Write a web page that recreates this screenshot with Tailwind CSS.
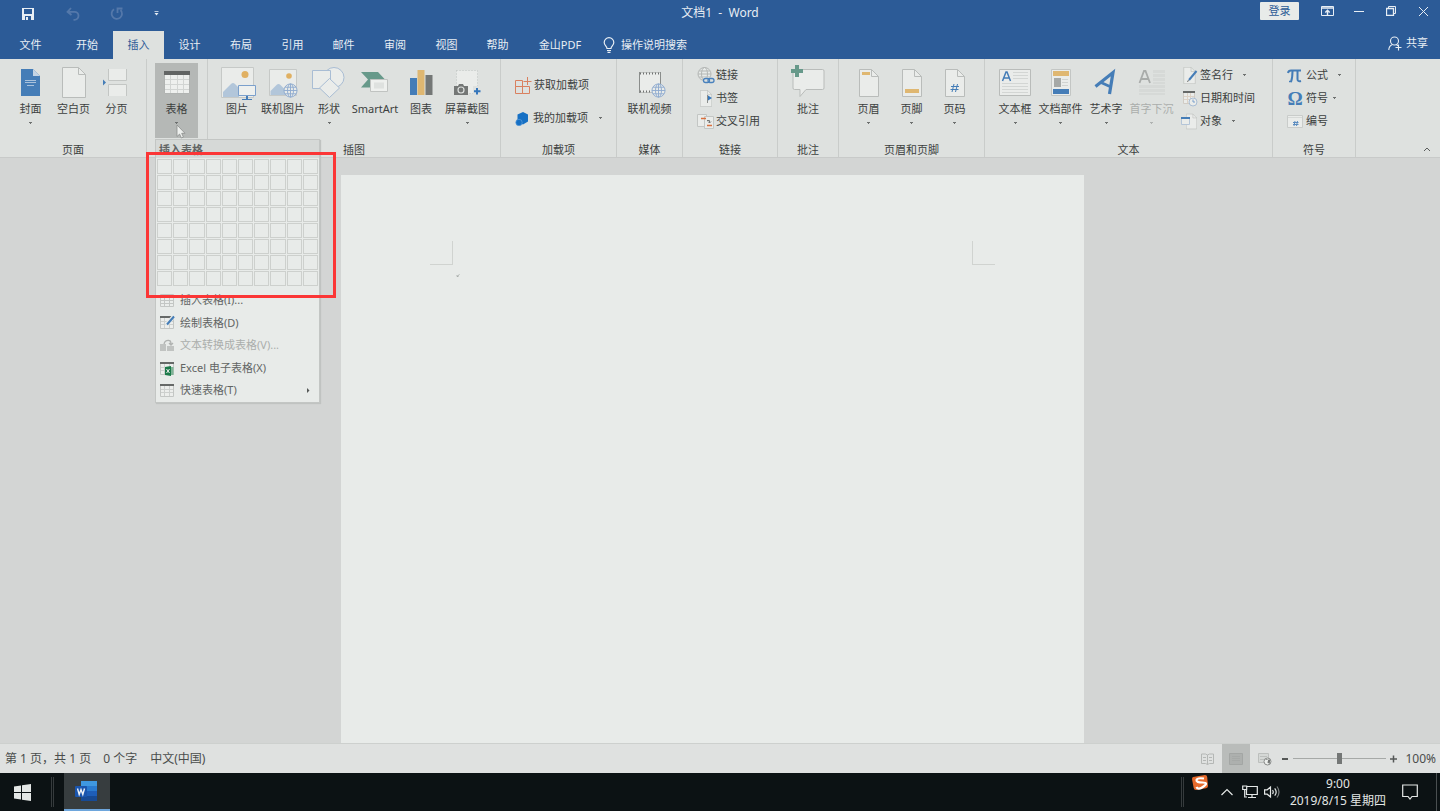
<!DOCTYPE html>
<html lang="zh-CN">
<head>
<meta charset="utf-8">
<title>文档1 - Word</title>
<script src="https://cdn.jsdelivr.net/npm/@tailwindcss/browser@4"></script>
</head>
<body class="flex h-screen flex-col overflow-hidden bg-[#d3d5d4] font-['Noto_Sans','Noto_Sans_CJK_SC',sans-serif] text-[11px] text-[#3c3f3e]">

<!-- shared symbols -->
<svg class="hidden">
  <symbol id="globe" viewBox="0 0 16 16"><g fill="#e8ebe9" stroke="#8fabcf" stroke-width="1"><circle cx="8" cy="8" r="7"/><ellipse cx="8" cy="8" rx="3.2" ry="7"/><path d="M1 8h14M2.2 4.5h11.6M2.2 11.5h11.6M8 1v14" fill="none"/></g></symbol>
  <symbol id="caret" viewBox="0 0 5 3"><path d="M1 0h3v1H3v1H2V1H1z" fill="#6e7170"/></symbol>
  <symbol id="page" viewBox="0 0 20 28"><path d="M.5.5h12l7 7v20H.5z" fill="#eaecea" stroke="#b9bcba"/><path d="M12.500.5v7h7" fill="none" stroke="#b9bcba"/></symbol>
  <symbol id="tbl" viewBox="0 0 14 13"><path d="M.5.5h13v12H.5z" fill="#eceeec" stroke="#c3c6c4"/><path d="M0 0h14v2H0z" fill="#666968"/><path d="M1 5.500h12M1 8.500h12M4.500 2v10M9.500 2v10" stroke="#cdd0ce"/></symbol>
</svg>

<!-- title bar -->
<header class="relative flex h-[31px] shrink-0 items-center justify-between bg-[#2c5b97] text-[#e8eef4]">
  <div class="flex items-center pb-[4px] pl-[21px]">
    <button aria-label="保存" class="mr-[31px]"><svg width="14" height="14" viewBox="0 0 14 14"><path d="M1 1h12v12H1z" fill="#e8eef4"/><path d="M3 2h8v5H3zM4 9h6v4H4z" fill="#2c5b97"/><path d="M5 10h2v3H5z" fill="#e8eef4"/></svg></button>
    <button aria-label="撤消" class="mr-[30px]"><svg width="14" height="14" viewBox="0 0 14 14" fill="none" stroke="#5478aa" stroke-width="1.800"><path d="M5 1L1.500 4.800 5.500 8M2 4.800h6.500a4 4 0 0 1 0 8H7.500"/></svg></button>
    <button aria-label="重复" class="mr-[30px]"><svg width="14" height="14" viewBox="0 0 14 14" fill="none" stroke="#5478aa" stroke-width="1.800"><path d="M4 2.300A5.200 5.200 0 1 0 10.500 3M7.500 6V1.500H12.500"/></svg></button>
    <button aria-label="自定义快速访问工具栏"><svg width="5" height="5" viewBox="0 0 5 5"><path d="M.5.5h4" stroke="#b9c9de"/><path d="M.5 2h4L2.500 4.500z" fill="#e8eef4"/></svg></button>
  </div>
  <h1 class="absolute inset-x-0 top-[3px] text-center text-[12px] leading-5 whitespace-pre">文档1  -  Word</h1>
  <div class="relative flex h-[22px] items-center self-start pr-[11px]">
    <button class="mr-[22px] h-[18px] w-[39px] rounded-[1px] bg-[#e8ebe9] leading-[18px] text-[#2c5b97]">登录</button>
    <button aria-label="功能区显示选项" class="mr-[20px]"><svg width="13" height="11" viewBox="0 0 13 11" fill="none" stroke="#e8eef4"><path d="M.5.5h12v9H.5z"/><path d="M1 2h11" stroke-width="1.500"/><path d="M6.500 9V4.500M4.300 6.500L6.500 4.300l2.200 2.200" stroke-width="1.400"/></svg></button>
    <button aria-label="最小化" class="mr-[22px]"><svg width="10" height="10" viewBox="0 0 10 10"><path d="M0 5.500h10" stroke="#e8eef4"/></svg></button>
    <button aria-label="还原" class="mr-[22px]"><svg width="10" height="10" viewBox="0 0 10 10" fill="none" stroke="#e8eef4"><path d="M.5 2.500h7v7h-7z" stroke-width="1.300"/><path d="M2.500 2V.5h7v7H8"/></svg></button>
    <button aria-label="关闭"><svg width="11" height="11" viewBox="0 0 11 11" stroke="#e8eef4"><path d="M1 1l9 9M10 1l-9 9"/></svg></button>
  </div>
</header>

<!-- tabs -->
<nav class="flex h-[28px] shrink-0 items-stretch bg-[#2c5b97] text-[#e8eef4]">
  <button class="w-[61px]">文件</button>
  <button class="w-[52px]">开始</button>
  <button class="w-[51px] bg-[#dee1df] text-[#2c5b97]">插入</button>
  <button class="w-[51px]">设计</button>
  <button class="w-[52px]">布局</button>
  <button class="w-[51px]">引用</button>
  <button class="w-[51px]">邮件</button>
  <button class="w-[52px]">审阅</button>
  <button class="w-[51px]">视图</button>
  <button class="w-[51px]">帮助</button>
  <button class="w-[74px]">金山PDF</button>
  <button class="flex items-center gap-[6px] pl-[6px]"><svg width="12" height="16" viewBox="0 0 12 16" fill="none" stroke="#e8eef4" stroke-width="1.200"><path d="M4 11.500C4 9 1.200 8.500 1.200 5.500a4.800 4.800 0 0 1 9.600 0C10.800 8.500 8 9 8 11.500z"/><path d="M4 13.500h4M4.500 15.300h3"/></svg>操作说明搜索</button>
  <button class="ml-auto flex items-center gap-[4px] pr-[12px] pb-[3px]"><svg width="14" height="15" viewBox="0 0 14 15" fill="none" stroke="#e8eef4" stroke-width="1.100"><circle cx="6.500" cy="5" r="4"/><path d="M.8 14c0-3 1.500-4.500 3.200-5.300M8.500 8.800l1.500 1M10.500 8.500v6M7.500 11.500h6"/></svg>共享</button>
</nav>

<!-- ribbon -->
<div class="relative z-10 flex h-[99px] shrink-0 border-b border-[#c8cac9] bg-[#dee1df]">
  <section class="flex w-[147px] flex-col justify-between border-r border-[#c9ccca] pt-[4px]">
    <div class="flex pl-[9px]">
      <button class="flex h-[75px] w-[43px] flex-col items-center pt-[2px]"><svg class="overflow-visible shrink-0" width="40" height="34"><path d="M10 4h12l7 7v20H10z" fill="#457db7"/><path d="M22 4v7h7z" fill="#c4d4e4"/><path d="M14 15.500h11M14 17.500h11M16 20.500h7" stroke="#a9c2dc"/></svg><span class="leading-5">封面</span><svg class="mt-[3px]" width="5" height="3"><use href="#caret"/></svg></button>
      <button class="flex h-[75px] w-[43px] flex-col items-center pt-[2px]"><svg class="shrink-0" width="40" height="34"><path d="M8.500 2.500h16l7 7v23h-23z" fill="#eaecea" stroke="#b9bcba"/><path d="M24.500 2.500v7h7" fill="none" stroke="#b9bcba"/></svg><span class="leading-5">空白页</span></button>
      <button class="flex h-[75px] w-[43px] flex-col items-center pt-[2px]"><svg class="shrink-0" width="40" height="34"><path d="M11 4h19v11.500H11zM11 19.500h19V31H11z" fill="#eaecea"/><path d="M11.500 4v11.500h18V4M11.500 31V19.500h18V31" fill="none" stroke="#c3c6c4"/><path d="M6 14.500l3 3L6 20.500z" fill="#457db7"/></svg><span class="leading-5">分页</span></button>
    </div>
    <h2 class="text-center leading-[14px]">页面</h2>
  </section>

  <section class="w-[61px] border-r border-[#c9ccca] pt-[4px] pl-[8px]">
    <button aria-expanded="true" class="flex h-[75px] w-[43px] flex-col items-center bg-[#b5b8b6] pt-[2px]"><svg class="shrink-0" width="40" height="34"><path d="M7.500 6.500h25v22h-25z" fill="#eef0ee" stroke="#b0b3b1"/><path d="M7 6h26v4H7z" fill="#626564"/><path d="M8 14.500h24M8 19.500h24M8 24.500h24M13.500 10v18M20.500 10v18M26.500 10v18" stroke="#d2d5d3"/></svg><span class="leading-5">表格</span><svg class="mt-[3px]" width="5" height="3"><use href="#caret"/></svg></button>
  </section>

  <section class="flex w-[293px] flex-col justify-between border-r border-[#c9ccca] pt-[4px]">
    <div class="flex pl-[6px]">
      <button class="flex h-[75px] w-[46px] flex-col items-center pt-[2px]"><svg class="overflow-visible shrink-0" width="40" height="34"><path d="M4.500 2.500h32v30h-32z" fill="#eaecea" stroke="#c6c9c7"/><circle cx="28" cy="9.500" r="3.500" fill="#e0b062"/><path d="M6 32V27l8-8q2-2 4 0l4 4v9z" fill="#b2c6da"/><path d="M21.500 20.500h17v10h-17z" fill="#eef0ee" stroke="#7ba0cc"/><path d="M30 31v3" stroke="#457db7" stroke-width="2"/><path d="M25 34.500h10" stroke="#457db7"/></svg><span class="leading-5">图片</span></button>
      <button class="flex h-[75px] w-[46px] flex-col items-center pt-[2px]"><svg class="overflow-visible shrink-0" width="40" height="34"><path d="M6.500 4.500h27v26h-27z" fill="#eaecea" stroke="#c6c9c7"/><circle cx="26" cy="11" r="2.800" fill="#e0b062"/><path d="M7.500 30v-4l6-6q2-2 4 0l5 5v5z" fill="#b2c6da"/><use href="#globe" x="20" y="18" width="15" height="15"/></svg><span class="leading-5 whitespace-nowrap">联机图片</span></button>
      <button class="flex h-[75px] w-[46px] flex-col items-center pt-[2px]"><svg class="overflow-visible shrink-0" width="40" height="34" fill="#eaecea" stroke="#a9bdd4"><circle cx="25" cy="12.500" r="10"/><path d="M3.500 5.500h18v18h-18z"/><path d="M20.500 13.500l10 9.500-10 9.500-10-9.500z"/></svg><span class="leading-5">形状</span><svg class="mt-[3px]" width="5" height="3"><use href="#caret"/></svg></button>
      <button class="flex h-[75px] w-[46px] flex-col items-center pt-[2px]"><svg class="shrink-0" width="40" height="34"><path d="M6 7h17l7 7.500-7 8H6l7-8z" fill="#67998a"/><path d="M15.500 14.500h17v12h-17z" fill="#eef0ee" stroke="#c0c3c1"/><path d="M19 17.500h10v6H19z" fill="#dee1df"/></svg><span class="leading-5">SmartArt</span></button>
      <button class="flex h-[75px] w-[46px] flex-col items-center pt-[2px]"><svg class="shrink-0" width="40" height="34"><path d="M9 13h7v17H9z" fill="#457db7"/><path d="M16.500 5h7v25h-7z" fill="#dfb771"/><path d="M24.500 10h7v20h-7z" fill="#747776"/></svg><span class="leading-5">图表</span></button>
      <button class="flex h-[75px] w-[46px] flex-col items-center pt-[2px]"><svg class="shrink-0" width="40" height="34"><path d="M9.500 5.500h21v23h-21z" fill="#eaecea" stroke="#bfc2c0" stroke-dasharray="1 2"/><path d="M7 21h4l1-2h4l1 2h4v9H7z" fill="#747776"/><circle cx="14" cy="25" r="3" fill="none" stroke="#dee1df" stroke-width="1.200"/><path d="M26 21h9v9h-9z" fill="#dee1df"/><path d="M30 23v6.500M27 26.200h6.500" stroke="#3576bb" stroke-width="2"/></svg><span class="leading-5 whitespace-nowrap">屏幕截图</span><svg class="mt-[3px]" width="5" height="3"><use href="#caret"/></svg></button>
    </div>
    <h2 class="text-center leading-[14px]">插图</h2>
  </section>

  <section class="flex w-[116px] flex-col justify-between border-r border-[#c9ccca] pt-[10px]">
    <div class="flex flex-col pl-[13px]">
      <button class="flex h-[33px] items-center gap-[2px]"><svg width="18" height="18" fill="none" stroke="#d9805f"><path d="M1.500 3.500h7v6h-7zM1.500 9.500h7v7h-7zM8.500 9.500h7v7h-7z"/><path d="M13.500 0v8M9.500 4.500h8"/></svg>获取加载项</button>
      <button class="flex h-[33px] items-center gap-[2px]"><svg width="17" height="16"><path d="M9 1l5 2.500v7L9 13.500 3.500 11V3.500z" fill="#1670c4"/><circle cx="5" cy="11.500" r="3.200" fill="#1670c4" stroke="#5b9bd8" stroke-width=".7"/></svg>我的加载项<svg class="ml-[8px]" width="5" height="3"><use href="#caret"/></svg></button>
    </div>
    <h2 class="text-center leading-[14px]">加载项</h2>
  </section>

  <section class="flex w-[66px] flex-col justify-between border-r border-[#c9ccca] pt-[4px]">
    <button class="flex h-[75px] w-full flex-col items-center pt-[2px]"><svg class="shrink-0" width="40" height="34"><path d="M9.500 7.500h21v20h-21z" fill="#eaecea" stroke="#c0c3c1"/><path d="M10 8.500h21M10 26.500h14" stroke="#6e7170" stroke-width="2" stroke-dasharray="1 2"/><path d="M9.500 7v21M30.500 7v12" stroke="#8a8d8b"/><use href="#globe" x="21" y="18" width="15" height="15"/></svg><span class="leading-5">联机视频</span></button>
    <h2 class="text-center leading-[14px]">媒体</h2>
  </section>

  <section class="flex w-[95px] flex-col justify-between border-r border-[#c9ccca] pt-[5px]">
    <div class="flex flex-col pl-[14px]">
      <button class="flex h-[23px] items-center gap-[2px]"><svg class="overflow-visible" width="17" height="17" fill="none"><g stroke="#b4b7b5"><circle cx="7.500" cy="7" r="6.500" fill="#e8ebe9"/><ellipse cx="7.500" cy="7" rx="3" ry="6.500"/><path d="M1 7h13M2 4h11M2 10h11"/></g><path d="M6 10.500h12v6H6z" fill="#dee1df"/><rect x="6.500" y="11.500" width="6" height="4" rx="2" stroke="#4a82bd" stroke-width="1.300"/><rect x="11" y="11.500" width="6" height="4" rx="2" stroke="#4a82bd" stroke-width="1.300"/></svg>链接</button>
      <button class="flex h-[23px] items-center gap-[2px]"><svg width="17" height="17"><use href="#page" x="3" y="0" width="12" height="17"/><path d="M10.500 5v8" stroke="#8a8d8b"/><path d="M11 5.500l4 2.500-4 2.500z" fill="#3576bb"/></svg>书签</button>
      <button class="flex h-[23px] items-center gap-[2px]"><svg width="17" height="17"><path d="M.5 1.500h9v12h-9z" fill="#eaecea" stroke="#c3c6c4"/><path d="M7.500 3.500h9v12h-9z" fill="#eaecea" stroke="#c3c6c4"/><path d="M4 5.500h5M10 12.500h5" stroke="#d9703f" stroke-width="1.500"/><path d="M10 7.500h2.500V10M11 8.500l1.500 1.500 1.500-1.500" fill="none" stroke="#747776"/></svg>交叉引用</button>
    </div>
    <h2 class="text-center leading-[14px]">链接</h2>
  </section>

  <section class="flex w-[61px] flex-col justify-between border-r border-[#c9ccca] pt-[4px]">
    <button class="flex h-[75px] w-full flex-col items-center pt-[2px]"><svg class="overflow-visible shrink-0" width="40" height="34"><path d="M6.500 4.500h28q1.500 0 1.500 1.500v17q0 1.500-1.500 1.500H18l-6 7v-7H6.500q-1.500 0-1.500-1.500V6q0-1.500 1.500-1.500z" fill="#eaecea" stroke="#b9bcba"/><path d="M9 0v12M3 6h12" stroke="#67998a" stroke-width="4"/></svg><span class="leading-5">批注</span></button>
    <h2 class="text-center leading-[14px]">批注</h2>
  </section>

  <section class="flex w-[146px] flex-col justify-between border-r border-[#c9ccca] pt-[4px]">
    <div class="flex pl-[8px]">
      <button class="flex h-[75px] w-[43px] flex-col items-center pt-[2px]"><svg class="shrink-0" width="40" height="34"><use href="#page" x="10" y="4" width="20" height="28"/><path d="M13 7h8v3h-8z" fill="#dfb771"/></svg><span class="leading-5">页眉</span><svg class="mt-[3px]" width="5" height="3"><use href="#caret"/></svg></button>
      <button class="flex h-[75px] w-[43px] flex-col items-center pt-[2px]"><svg class="shrink-0" width="40" height="34"><use href="#page" x="10" y="4" width="20" height="28"/><path d="M13 24h14v4H13z" fill="#dfb771"/></svg><span class="leading-5">页脚</span><svg class="mt-[3px]" width="5" height="3"><use href="#caret"/></svg></button>
      <button class="flex h-[75px] w-[43px] flex-col items-center pt-[2px]"><svg class="shrink-0" width="40" height="34"><use href="#page" x="10" y="4" width="20" height="28"/><path d="M19 19l-2 8M22.500 19l-2 8M16 21.500h8M15.500 24.500h8" stroke="#457db7"/></svg><span class="leading-5">页码</span><svg class="mt-[3px]" width="5" height="3"><use href="#caret"/></svg></button>
    </div>
    <h2 class="text-center leading-[14px]">页眉和页脚</h2>
  </section>

  <section class="flex w-[288px] flex-col justify-between border-r border-[#c9ccca] pt-[4px]">
    <div class="flex">
      <div class="flex pl-[7px]">
        <button class="flex h-[75px] w-[46px] flex-col items-center pt-[2px]"><svg class="shrink-0" width="40" height="34"><path d="M4.500 4.500h31v26h-31z" fill="#eaecea" stroke="#b9bcba"/><path d="M18 7.500h15M18 10.500h15M18 13.500h15M7 18.500h26M7 21.500h26M7 24.500h26M7 27.500h26" stroke="#d3d6d4"/><path d="M7.500 16l3.500-9h1l3.500 9M9 13h5" fill="none" stroke="#457db7" stroke-width="1.500"/></svg><span class="leading-5">文本框</span><svg class="mt-[3px]" width="5" height="3"><use href="#caret"/></svg></button>
        <button class="flex h-[75px] w-[45px] flex-col items-center pt-[2px]"><svg class="shrink-0" width="40" height="34"><path d="M10.500 4.500h19v26h-19z" fill="#eaecea" stroke="#c3c6c4"/><path d="M12 6h16v5H12z" fill="#dfb771"/><path d="M13 13h7v9h-7z" fill="#a6a9a7"/><path d="M12 24h16v5H12z" fill="#457db7"/><path d="M21 14.500h6M21 17.500h6M21 20.500h6" stroke="#d0d3d1"/></svg><span class="leading-5 whitespace-nowrap">文档部件</span><svg class="mt-[3px]" width="5" height="3"><use href="#caret"/></svg></button>
        <button class="flex h-[75px] w-[46px] flex-col items-center pt-[2px]"><svg class="shrink-0" width="40" height="34" fill="none" stroke="#457db7"><path d="M9.500 21.500L27 7.500 23.500 29" stroke-width="3.200" stroke-linejoin="miter"/><path d="M15 17.500l10 4.500" stroke-width="2.600"/></svg><span class="leading-5">艺术字</span><svg class="mt-[3px]" width="5" height="3"><use href="#caret"/></svg></button>
        <button disabled class="flex h-[75px] w-[45px] flex-col items-center pt-[2px] text-[#abaeac]"><svg class="shrink-0" width="40" height="34"><path d="M21 5h12v14H21zM7 20h26v10H7z" fill="#d6d9d7"/><path d="M21 8.500h12M21 12.500h12M21 16.500h12M7 23.500h26M7 27.500h26" stroke="#dee1df"/><path d="M7.500 18L12 6h1.500L18 18M9.500 14h7" fill="none" stroke="#a9acaa" stroke-width="1.800"/></svg><span class="leading-5 whitespace-nowrap">首字下沉</span><svg class="mt-[3px] opacity-40" width="5" height="3"><use href="#caret"/></svg></button>
      </div>
      <div class="flex flex-col pt-px pl-[7px]">
        <button class="flex h-[23px] items-center gap-[2px]"><svg width="17" height="17"><use href="#page" x="2" y="0" width="13" height="17"/><path d="M8 13l7.500-9" stroke="#457db7" stroke-width="2"/><path d="M6 14.500l2-1" stroke="#747776"/></svg>签名行<svg class="ml-[7px]" width="5" height="3"><use href="#caret"/></svg></button>
        <button class="flex h-[23px] items-center gap-[2px]"><svg width="17" height="17"><path d="M2.500 1.500h11v12h-11z" fill="#eaecea" stroke="#d0cbc4"/><path d="M2 1h12v2H2z" fill="#666968"/><path d="M3 6.500h10M3 9.500h10M6.500 3v10M9.500 3v10" stroke="#ddd2c6"/><circle cx="12" cy="12" r="4" fill="#eaecea" stroke="#a9bdd4"/><path d="M12 9.500V12h2" fill="none" stroke="#7ba0cc"/></svg>日期和时间</button>
        <button class="flex h-[23px] items-center gap-[2px]"><svg width="17" height="17"><use href="#page" x="5" y="0" width="11" height="17"/><path d="M.5 4.500h8v7h-8z" fill="#eaecea" stroke="#b4c5d8"/><path d="M0 4h9v2H0z" fill="#457db7"/></svg>对象<svg class="ml-[7px]" width="5" height="3"><use href="#caret"/></svg></button>
      </div>
    </div>
    <h2 class="text-center leading-[14px]">文本</h2>
  </section>

  <section class="flex w-[83px] flex-col justify-between border-r border-[#c9ccca] pt-[5px]">
    <div class="flex flex-col pl-[14px]">
      <button class="flex h-[23px] items-center gap-[3px]"><svg width="16" height="16" fill="none" stroke="#457db7"><path d="M1 5Q1.500 2.500 4 2.500H14" stroke-width="2"/><path d="M5.500 3q0 7-1.500 11M10.500 3v8q0 3 3.500 2" stroke-width="2"/><path d="M2 13.500h3" stroke-width="1.500"/></svg>公式<svg class="ml-[6px]" width="5" height="3"><use href="#caret"/></svg></button>
      <button class="flex h-[23px] items-center gap-[3px]"><span class="w-[16px] text-center font-['Liberation_Serif',serif] text-[19px] leading-5 font-bold text-[#457db7]">Ω</span>符号<svg class="ml-px" width="5" height="3"><use href="#caret"/></svg></button>
      <button class="flex h-[23px] items-center gap-[3px]"><svg width="16" height="16"><path d="M.5 1.500h15v12H.5z" fill="#eaecea" stroke="#c9ccca"/><path d="M1 3.500h14" stroke="#d6d9d7"/><path d="M8 7l-1 5M10.500 7l-1 5M6 8.500h5.500M6 10.500h5.500" stroke="#5b8cc0"/></svg>编号</button>
    </div>
    <h2 class="text-center leading-[14px]">符号</h2>
  </section>
  <button aria-label="折叠功能区" class="mr-[9px] mb-[5px] ml-auto self-end"><svg width="8" height="5" fill="none" stroke="#5a5d5c"><path d="M1 4l3-3 3 3"/></svg></button>

  <!-- table menu -->
  <div class="absolute top-[80px] left-[155px] w-[165px] border border-[#c3c6c4] bg-[#e8ebe9] text-[#626564] shadow-[1px_1px_1px_#c0c3c1]">
    <h3 class="h-[18px] bg-[#d6d9d7] pl-[3px] leading-[20px] font-bold">插入表格</h3>
    <div id="cells" class="grid grid-cols-10 gap-px px-px pt-px pb-[3px]"></div>
    <ul class="grid h-[113px] grid-rows-5">
      <li><button class="flex h-full w-full items-center gap-[6px] pl-[4px]"><svg class="opacity-70" width="14" height="13"><path d="M.5.5h13v12H.5z" fill="#eceeec" stroke="#b4b7b5"/><path d="M1 3.500h12M1 6.500h12M1 9.500h12M4.500 1v11M9.500 1v11" stroke="#b4b7b5"/></svg>插入表格(I)...</button></li>
      <li><button class="flex h-full w-full items-center gap-[6px] pl-[4px]"><svg class="overflow-visible" width="14" height="13"><use href="#tbl" width="14" height="13"/><path d="M6 9l7.500-8.500" stroke="#e8ebe9" stroke-width="4"/><path d="M7 8.500L14 .5" stroke="#457db7" stroke-width="2"/></svg>绘制表格(D)</button></li>
      <li><button disabled class="flex h-full w-full items-center gap-[6px] pl-[4px] text-[#abaeac]"><svg width="14" height="13"><path d="M0 5h6v7H0zM7 7h7v5H7z" fill="#c0c3c1"/><path d="M4 5q1-4 5-3.500 2 0 2 4M9 4l2 2 2-2" fill="none" stroke="#b0b3b1" stroke-width="1.300"/></svg>文本转换成表格(V)...</button></li>
      <li><button class="flex h-full w-full items-center gap-[6px] pl-[4px]"><svg class="overflow-visible" width="14" height="13"><use href="#tbl" width="14" height="13"/><path d="M5 5l6-1v10l-6-1z" fill="#1c7a4a"/><path d="M11 5h2.500v8H11z" fill="#7fb497"/><path d="M6.500 7l3 4M9.500 7l-3 4" stroke="#eef0ee"/></svg>Excel 电子表格(X)</button></li>
      <li><button class="flex h-full w-full items-center gap-[6px] pr-[9px] pl-[4px]"><svg width="14" height="13"><use href="#tbl" width="14" height="13"/></svg>快速表格(T)<svg class="ml-auto" width="3" height="5"><path d="M0 0l2.500 2.500L0 5z" fill="#555857"/></svg></button></li>
    </ul>
  </div>
  <!-- highlight frame -->
  <div class="pointer-events-none absolute top-[93px] left-[146px] h-[146px] w-[190px] border-3 border-[#fb3636]"></div>
  <!-- mouse pointer -->
  <svg class="pointer-events-none absolute top-[65px] left-[176px]" width="10" height="15"><path d="M1 1v11.500l2.600-2.400L5.400 14l2-.9-1.700-3.800H9z" fill="#eef0ee" stroke="#8a8d8b" stroke-width=".8"/></svg>
</div>

<!-- document -->
<main class="flex min-h-0 flex-1 justify-center pt-[17px] pr-[16px]">
  <article class="flex w-[743px] items-start justify-between bg-[#e8ebe9] px-[89px] pt-[66px]">
    <div>
      <div class="h-[24px] w-[23px] border-r border-b border-[#d0d3d0]"></div>
      <svg class="mt-[9px] ml-[26px]" width="5" height="4" fill="none" stroke="#a0a3a1" stroke-width=".8"><path d="M3.500 .5L1.500 2M1 1v1.500h1.500"/></svg>
    </div>
    <div class="h-[24px] w-[23px] border-b border-l border-[#d0d3d0]"></div>
  </article>
</main>

<!-- status bar -->
<footer class="flex h-[30px] shrink-0 items-center border-t border-[#cdd0ce] bg-[#dfe1e0] pl-[5px] text-[12px] text-[#4a4d4c]">
  <span class="mr-[12px]">第 1 页，共 1 页</span><span class="mr-[13px]">0 个字</span><span>中文(中国)</span>
  <div class="ml-auto flex h-full items-center">
    <button aria-label="阅读视图" class="mr-[8px]"><svg width="13" height="12" fill="none" stroke="#b4b7b5"><path d="M6.500 2v9.500M.5 1h4l2 1 2-1h4v9.500h-4l-2 1-2-1h-4zM2 4.500h3M2 7.500h3M8 4.500h3M8 7.500h3"/></svg></button>
    <button aria-label="页面视图" class="flex h-full w-[28px] items-center justify-center bg-[#b9bcba]"><svg width="14" height="12"><path d="M.5.5h13v11H.5z" fill="#adb0ae" stroke="#a3a6a4"/><path d="M3 3.500h8M3 5.500h8M3 7.500h8" stroke="#a6a9a7"/></svg></button>
    <button aria-label="Web 版式视图" class="ml-[8px]"><svg width="14" height="14"><path d="M.5 1.500h10v9H.5z" fill="#d5d8d6" stroke="#bcbfbd"/><path d="M2 4.500h7M2 7.500h4" stroke="#bcbfbd"/><circle cx="9.500" cy="9.500" r="3.500" fill="#eceeec" stroke="#8a8d8b"/><path d="M7 8q2.500-2 3 0t-1 2l2.500 2q1-3 .5-4.500" fill="#747776"/></svg></button>
    <button aria-label="缩小" class="ml-[10px]"><svg width="7" height="8"><path d="M0 4h6" stroke="#555857" stroke-width="2"/></svg></button>
    <input type="range" aria-label="缩放" min="0" max="200" value="100" class="mx-[4px] h-[12px] w-[93px] appearance-none bg-[linear-gradient(#a6a9a7,#a6a9a7)] bg-[length:100%_1px] bg-center bg-no-repeat [&::-webkit-slider-thumb]:h-[11px] [&::-webkit-slider-thumb]:w-[5px] [&::-webkit-slider-thumb]:appearance-none [&::-webkit-slider-thumb]:bg-[#747776]">
    <button aria-label="放大" class="mr-[8px]"><svg width="7" height="8"><path d="M0 4h7M3.500.5v7" stroke="#555857" stroke-width="1.500"/></svg></button>
    <span class="pr-[4px]">100%</span>
  </div>
</footer>

<!-- taskbar -->
<div class="flex h-[38px] shrink-0 items-stretch bg-[#0c1214] text-[#e4e7e6]">
  <button aria-label="开始" class="flex w-[51px] items-center pl-[14px]"><svg width="17" height="17" fill="#e4e7e6"><path d="M0 2.500l7-1v6.500H0zM8 1.300L17 0v8H8zM0 9h7v6.500l-7-1zM8 9h9v8l-9-1.300z"/></svg></button>
  <div class="my-[4px] w-[3px] border-x border-[#363b3d]"></div>
  <button aria-label="Word" class="ml-[10px] flex w-[46px] items-center justify-center border-b-2 border-[#6ea6dc] bg-[#373d3f]"><svg width="24" height="21"><path d="M6 0h16v5H6z" fill="#3f98e0"/><path d="M6 5h16v5H6z" fill="#2a7bd0"/><path d="M6 10h16v5H6z" fill="#1e5eb8"/><path d="M6 15h16v5H6z" fill="#174a94"/><rect y="5" width="12" height="11" rx="1" fill="#1a55ad"/><path d="M2.500 7.500l1.700 6L6 8.500l1.800 5 1.700-6" fill="none" stroke="#eef2f6" stroke-width="1.400"/></svg></button>
  <div class="ml-auto flex items-stretch">
    <div class="my-[4px] mr-[8px] w-[3px] border-x border-[#363b3d]"></div>
    <svg class="mt-[2px] mr-[13px]" width="16" height="15"><path d="M1 2l12-2q2 0 2.200 2L16 11q0 2-2 2.300L4 15q-2 0-2.300-2L0 4q0-1.700 1-2z" fill="#e66a2c"/><path d="M12 3.500Q5 2.500 4.500 5t6 2.500 1 4-7 .5" fill="none" stroke="#fff" stroke-width="2.200"/></svg>
    <button aria-label="显示隐藏的图标" class="mr-[9px]"><svg width="12" height="8" fill="none" stroke="#e4e7e6" stroke-width="1.200"><path d="M.5 7L6 1.500 11.500 7"/></svg></button>
    <button aria-label="网络" class="mr-[6px]"><svg width="16" height="14" fill="none" stroke="#e4e7e6" stroke-width="1.200"><path d="M5 1.500h10.300v8H4.500V5M10 9.500V12M6 12.500h8M.7 1h4v3.500h-4zM2.700 4.500V12H5"/></svg></button>
    <button aria-label="音量" class="mr-[10px]"><svg width="16" height="14" fill="none" stroke="#e4e7e6" stroke-width="1.200"><path d="M.6 4.800h2.600L6.500 2v10L3.200 9.200H.6zM8.500 5q1.500 2 0 4M10.700 3.300q3 3.700 0 7.400"/><path d="M13 1.500q4 5.500 0 11" stroke="#7a7e7f"/></svg></button>
    <div class="flex flex-col justify-center text-center text-[12px] leading-[17px]"><span>9:00</span><span>2019/8/15 星期四</span></div>
    <button aria-label="通知" class="mr-[18px] ml-[16px]"><svg width="16" height="16" fill="none" stroke="#e4e7e6" stroke-width="1.200"><path d="M.7 1h14.600v11.500H10L8 15l-2-2.500H.7z"/></svg></button>
    <div class="w-[4px] border-l border-[#4a4f51]"></div>
  </div>
</div>

<script>
  // 10 x 8 size picker
  const cells = document.getElementById('cells');
  for (let i = 0; i < 80; i++) {
    const b = document.createElement('button');
    b.className = 'h-[15px] border border-[#cdd0cd]';
    b.setAttribute('aria-label', (i % 10 + 1) + ' x ' + (Math.floor(i / 10) + 1) + ' 表格');
    cells.appendChild(b);
  }
</script>
</body>
</html>
